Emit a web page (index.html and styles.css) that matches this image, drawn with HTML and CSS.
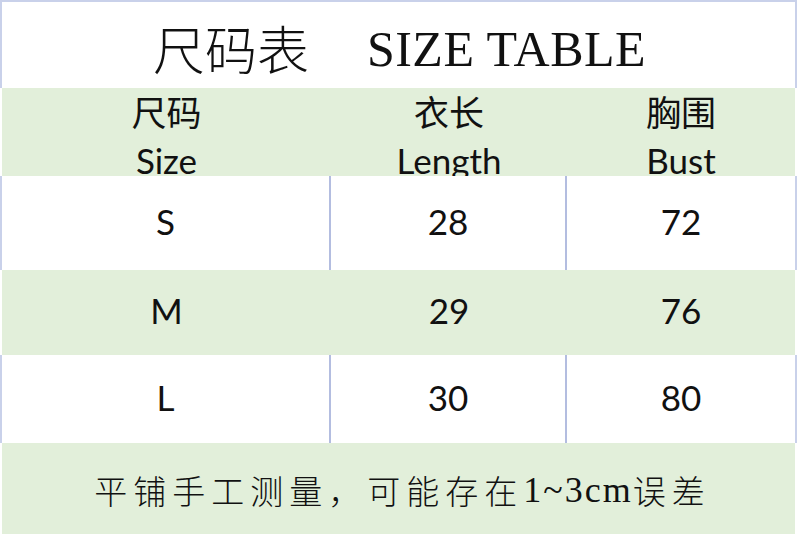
FILE: index.html
```html
<!DOCTYPE html>
<html lang="zh-CN">
<head>
<meta charset="utf-8">
<title>尺码表 SIZE TABLE</title>
<link rel="stylesheet" href="styles.css">
</head>
<body>
<div class="sheet">
  <div class="title"><span class="title-cn">尺码表</span><span class="title-en">SIZE TABLE</span></div>
  <div class="row green head">
    <div class="cell">尺码<br>Size</div>
    <div class="cell">衣长<br>Length</div>
    <div class="cell">胸围<br>Bust</div>
  </div>
  <div class="row white r-s">
    <div class="cell">S</div>
    <div class="cell">28</div>
    <div class="cell">72</div>
  </div>
  <div class="row green r-m">
    <div class="cell">M</div>
    <div class="cell">29</div>
    <div class="cell">76</div>
  </div>
  <div class="row white r-l">
    <div class="cell">L</div>
    <div class="cell">30</div>
    <div class="cell">80</div>
  </div>
  <div class="note">平铺手工测量，可能存在<span class="note-en">1~3cm</span>误差</div>
</div>
</body>
</html>
```
FILE: styles.css
```css
html, body {
  margin: 0;
  padding: 0;
  background: #ffffff;
}
.sheet {
  width: 797px;
  height: 534px;
  overflow: hidden;
  color: #111;
  font-family: Lato, "Noto Sans CJK SC", sans-serif;
}
.title {
  box-sizing: border-box;
  height: 88px;
  border: 2px solid #c9d1ea;
  border-bottom: none;
  display: flex;
  align-items: center;
  justify-content: center;
  padding-top: 6px;
  padding-left: 2px;
  gap: 58px;
}
.title-cn {
  font-family: "Noto Sans CJK SC", sans-serif;
  font-size: 52px;
  font-weight: 300;
  line-height: 1;
}
.title-en {
  font-family: "Liberation Serif", serif;
  font-size: 50px;
  letter-spacing: 0.5px;
  line-height: 1;
  margin-top: 2px;
}
.row {
  box-sizing: border-box;
  display: grid;
  grid-template-columns: 329px 236px 1fr;
  border-left: 2px solid transparent;
  border-right: 2px solid transparent;
}
.green {
  background: #e2efda;
  background-clip: padding-box;
}
.white {
  border-left-color: #c9d1ea;
  border-right-color: #c9d1ea;
}
.white .cell:not(:last-child) {
  border-right: 2px solid #b3bde0;
}
.head {
  height: 88px;
  overflow: hidden;
}
.head .cell {
  text-align: center;
  font-size: 35px;
  line-height: 48px;
  padding-top: 0;
  overflow: hidden;
}
.r-s { height: 94px; }
.r-m { height: 85px; }
.r-l { height: 88px; }
.row:not(.head) .cell {
  display: flex;
  align-items: center;
  justify-content: center;
  font-size: 35px;
  line-height: 1;
  padding-bottom: 4px;
}
.note {
  box-sizing: border-box;
  height: 91px;
  margin: 0 2px;
  background: #e2efda;
  display: flex;
  align-items: center;
  justify-content: center;
  font-family: "Noto Sans CJK SC", sans-serif;
  font-size: 33px;
  font-weight: 300;
  letter-spacing: 6px;
  padding-top: 3px;
  padding-left: 8px;
}
.note-en {
  font-family: "Liberation Serif", serif;
  font-size: 36px;
  letter-spacing: 2px;
}
```
